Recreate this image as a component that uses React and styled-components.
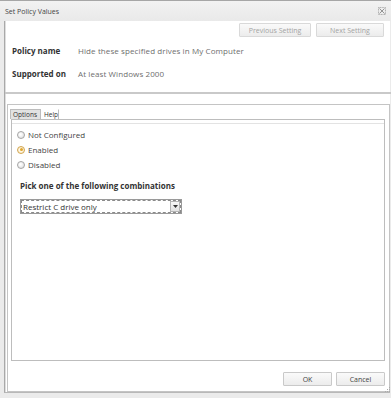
import React from "react";
import styled, { createGlobalStyle } from "styled-components";

const Global = createGlobalStyle`
  html, body { margin: 0; padding: 0; background: #ffffff; }
  * { box-sizing: border-box; }
`;

const Window = styled.div`
  position: relative;
  width: 391px;
  height: 398px;
  display: flex;
  flex-direction: column;
  background: #ebebeb;
  border-top: 1px solid #a6a6a6;
  font-family: "Open Sans", "DejaVu Sans", sans-serif;
  color: #333;
  overflow: hidden;
`;

const TitleBar = styled.div`
  height: 20px;
  flex: none;
  display: flex;
  align-items: center;
  justify-content: space-between;
  padding: 0 5px 0 5px;
  background: linear-gradient(#f2f2f2, #e9e9e9);
  font-size: 7px;
  color: #444;
`;

const Frame = styled.div`
  flex: 1;
  display: flex;
  flex-direction: column;
  margin: 0 1px 5px 4px;
  background: #fff;
  border-left: 1px solid #a9a9a9;
  border-bottom: 1px solid #b8b8b8;
  box-shadow: inset 1px 0 0 #dedede;
`;

const NavRow = styled.div`
  display: flex;
  justify-content: flex-end;
  gap: 5px;
  padding: 2px 6px 0 0;
`;

const Button = styled.button`
  height: 14px;
  width: ${(p) => p.$w}px;
  padding: 0;
  margin: 0;
  font-family: inherit;
  font-size: 7px;
  color: ${(p) => (p.disabled ? "#a3a3a3" : "#444")};
  background: linear-gradient(#fafafa, #ececec);
  border: 1px solid ${(p) => (p.disabled ? "#d9d9d9" : "#c9c9c9")};
  border-radius: 1px;
`;

const InfoGrid = styled.div`
  display: grid;
  grid-template-columns: 66px 1fr;
  row-gap: 11px;
  margin-top: 8px;
  padding-left: 7px;
  font-size: 8px;
  line-height: 12px;
`;

const Label = styled.div`
  font-weight: 700;
  color: #333;
`;

const Value = styled.div`
  color: #6e6e6e;
  letter-spacing: 0.1px;
`;

const Separator = styled.div`
  height: 2px;
  margin-top: 12px;
  margin-right: -1px;
  background: #c9c9c9;
`;

const OptionsBox = styled.div`
  flex: 1;
  display: flex;
  flex-direction: column;
  margin: 10px 0 0 2px;
  border: 1px solid #c4c4c4;
  padding: 4px 4px 5px 2px;
`;

const TabStrip = styled.div`
  display: flex;
  height: 10px;
`;

const Tab = styled.div`
  width: ${(p) => p.$w}px;
  height: 10px;
  font-size: 6.5px;
  line-height: 9px;
  padding-left: 2px;
  color: #333;
  background: ${(p) => (p.$active ? "#e2e2e2" : "#fff")};
  border: 1px solid ${(p) => (p.$active ? "#bdbdbd" : "transparent")};
  border-bottom: none;
  border-right: 1px solid #bdbdbd;
`;

const TabPanel = styled.div`
  flex: 1;
  border: 1px solid #bdbdbd;
  margin-left: 1px;
  padding: 7px 0 0 5px;
  box-shadow: inset 0 3px 0 #fff, inset 0 4px 0 #e3e3e3;
`;

const RadioRow = styled.div`
  display: flex;
  align-items: center;
  height: 15px;
  gap: 3px;
  font-size: 8px;
  color: #444;
`;

const Radio = styled.span`
  width: 8px;
  height: 8px;
  border-radius: 50%;
  flex: none;
  display: flex;
  align-items: center;
  justify-content: center;
  border: 1px solid ${(p) => (p.$checked ? "#d2a650" : "#a5a5a5")};
  background: ${(p) =>
    p.$checked
      ? "radial-gradient(circle, #fff8e6 40%, #f4e2b8 100%)"
      : "radial-gradient(circle at 40% 40%, #ffffff 10%, #d6d6d6 100%)"};
  &::after {
    content: "";
    display: ${(p) => (p.$checked ? "block" : "none")};
    width: 3px;
    height: 3px;
    border-radius: 50%;
    background: #e0a630;
  }
`;

const PickLabel = styled.div`
  margin: 8px 0 0 3px;
  font-size: 8px;
  line-height: 12px;
  font-weight: 700;
  color: #333;
`;

const Select = styled.div`
  margin: 7px 0 0 3px;
  width: 162px;
  height: 15px;
  display: flex;
  align-items: stretch;
  border: 1px solid #9a9a9a;
  outline: 1px dashed #8a8a8a;
  outline-offset: -2px;
  background: #fff;
  font-size: 8px;
  color: #333;
`;

const SelectText = styled.div`
  flex: 1;
  line-height: 13px;
  padding-left: 2px;
`;

const Arrow = styled.div`
  width: 10px;
  margin: 1px 1px 1px 0;
  display: flex;
  align-items: center;
  justify-content: center;
  background: linear-gradient(#f7f7f7, #e2e2e2);
  border: 1px solid #b5b5b5;
`;

const Footer = styled.div`
  display: flex;
  justify-content: flex-end;
  gap: 4px;
  margin-top: 11px;
`;

const Grip = styled.div`
  position: absolute;
  right: 1px;
  bottom: 6px;
  line-height: 0;
`;

const CloseIcon = () => (
  <svg width="8" height="8" viewBox="0 0 8 8">
    <rect x="0.5" y="0.5" width="7" height="7" fill="none" stroke="#9a9a9a" strokeWidth="0.8" strokeDasharray="1 0.6" />
    <path d="M1.5 1.5 L6.5 6.5 M6.5 1.5 L1.5 6.5" stroke="#8a8a8a" strokeWidth="0.9" />
  </svg>
);

export default function App() {
  return (
    <>
      <Global />
      <Window>
        <TitleBar>
          <span>Set Policy Values</span>
          <CloseIcon />
        </TitleBar>
        <Frame>
          <NavRow>
            <Button $w={72} disabled>Previous Setting</Button>
            <Button $w={68} disabled>Next Setting</Button>
          </NavRow>
          <InfoGrid>
            <Label>Policy name</Label>
            <Value>Hide these specified drives in My Computer</Value>
            <Label>Supported on</Label>
            <Value>At least Windows 2000</Value>
          </InfoGrid>
          <Separator />
          <OptionsBox>
            <TabStrip>
              <Tab $w={31} $active>Options</Tab>
              <Tab $w={18}>Help</Tab>
            </TabStrip>
            <TabPanel>
              <RadioRow><Radio />Not Configured</RadioRow>
              <RadioRow><Radio $checked />Enabled</RadioRow>
              <RadioRow><Radio />Disabled</RadioRow>
              <PickLabel>Pick one of the following combinations</PickLabel>
              <Select>
                <SelectText>Restrict C drive only</SelectText>
                <Arrow>
                  <svg width="5" height="3" viewBox="0 0 5 3">
                    <path d="M0 0 L5 0 L2.5 3 Z" fill="#333" />
                  </svg>
                </Arrow>
              </Select>
            </TabPanel>
            <Footer>
              <Button $w={49}>OK</Button>
              <Button $w={49}>Cancel</Button>
            </Footer>
          </OptionsBox>
        </Frame>
        <Grip>
          <svg width="5" height="5" viewBox="0 0 5 5">
            <rect x="4" y="0" width="1" height="1" fill="#aaa" />
            <rect x="2" y="2" width="1" height="1" fill="#aaa" />
            <rect x="4" y="2" width="1" height="1" fill="#aaa" />
            <rect x="0" y="4" width="1" height="1" fill="#aaa" />
            <rect x="2" y="4" width="1" height="1" fill="#aaa" />
            <rect x="4" y="4" width="1" height="1" fill="#aaa" />
          </svg>
        </Grip>
      </Window>
    </>
  );
}
